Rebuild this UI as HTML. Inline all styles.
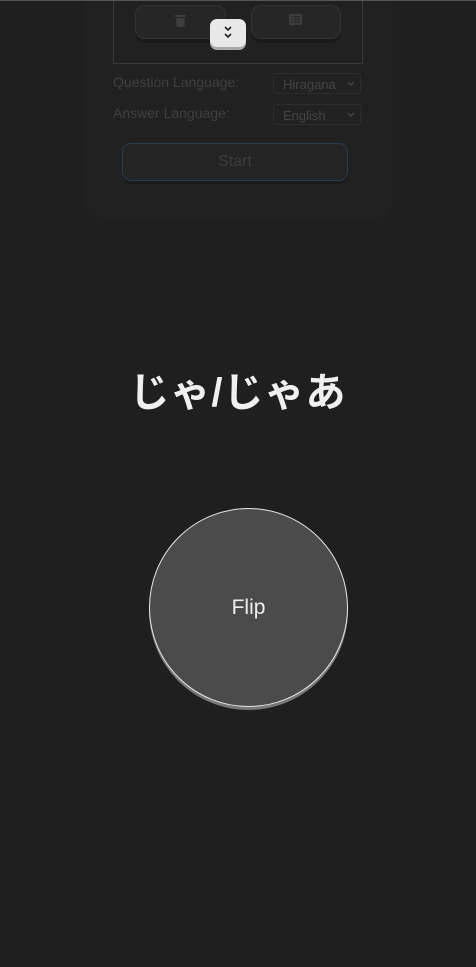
<!DOCTYPE html>
<html><head><meta charset="utf-8"><style>
html,body{margin:0;padding:0;width:476px;height:967px;background:#1f1f1f;overflow:hidden;font-family:"Liberation Sans","Noto Sans CJK JP",sans-serif;position:relative}
.top{position:absolute;left:0;top:0;width:476px;height:1px;background:#555;z-index:5}
.panel{position:absolute;left:84px;top:-20px;width:309px;height:238px;background:#212121;border-radius:0 0 18px 18px}
.box{position:absolute;left:113px;top:-2px;width:248px;height:64px;border:1px solid #3a3a3a}
.btn{position:absolute;top:5px;height:32px;background:#262626;border:1px solid #333;border-radius:10px;box-shadow:0 4px 0 #1a1a1a}
.tog{position:absolute;left:210px;top:19px;width:36px;height:28px;background:#e8e8e8;border-radius:7px;box-shadow:0 3px 0 #aaa}
.lbl{position:absolute;left:113px;color:#3f3f3f;font-size:14px}
.sel{position:absolute;left:273px;width:88px;height:21px;border:1px solid #2c2c2c;border-radius:3px;color:#444;font-size:13px;line-height:21px;box-sizing:border-box;padding-left:9px}
.sel svg{position:absolute;right:5px;top:7px}
.start{position:absolute;left:122px;top:143px;width:226px;height:38px;border:1px solid #2c3a4e;border-radius:9px;background:#242424;box-sizing:border-box;box-shadow:0 3px 0 #1a1a1a;color:#3c3c3c;font-size:16px;text-align:center;line-height:36px}
h1{position:absolute;left:0;width:476px;top:360px;margin:0;text-align:center;color:#f0f0f0;font-size:40px;font-weight:bold;letter-spacing:1px}
.flip{position:absolute;left:149px;top:508px;width:197px;height:197px;border-radius:50%;background:#4b4b4b;border:1.5px solid #e6e6e6;box-shadow:0 3px 0 #777;color:#eee;font-size:21px;text-align:center;line-height:197px}
</style></head><body>
<div class="top"></div>
<div class="panel"></div>
<div class="box"></div>
<div class="btn" style="left:135px;width:89px"><svg style="position:absolute;left:39px;top:8px" width="11" height="13" viewBox="0 0 11 13"><rect x="0" y="1" width="11" height="2" fill="#3d3d3d"/><rect x="1.5" y="4" width="8" height="9" fill="#3d3d3d"/></svg></div>
<div class="btn" style="left:251px;width:88px"><svg style="position:absolute;left:37px;top:8px" width="13" height="11" viewBox="0 0 13 11"><rect width="13" height="11" rx="2" fill="#3d3d3d"/><g stroke="#262626" stroke-width="1.2"><line x1="2" y1="3" x2="3" y2="3"/><line x1="4.5" y1="3" x2="11" y2="3"/><line x1="2" y1="5.5" x2="3" y2="5.5"/><line x1="4.5" y1="5.5" x2="11" y2="5.5"/><line x1="2" y1="8" x2="3" y2="8"/><line x1="4.5" y1="8" x2="11" y2="8"/></g></svg></div>
<div class="tog"><svg style="position:absolute;left:13px;top:7px" width="10" height="14" viewBox="0 0 10 14" fill="none" stroke="#222" stroke-width="1.6"><polyline points="2,1 5,4 8,1"/><polyline points="2,8 5,11 8,8"/></svg></div>
<div class="lbl" style="top:74px">Question Language:</div>
<div class="sel" style="top:73px">Hiragana<svg width="8" height="6" viewBox="0 0 8 6" fill="none" stroke="#444" stroke-width="1.5"><polyline points="1,1 4,4 7,1"/></svg></div>
<div class="lbl" style="top:105px">Answer Language:</div>
<div class="sel" style="top:104px">English<svg width="8" height="6" viewBox="0 0 8 6" fill="none" stroke="#444" stroke-width="1.5"><polyline points="1,1 4,4 7,1"/></svg></div>
<div class="start">Start</div>
<h1>じゃ/じゃあ</h1>
<div class="flip">Flip</div>
</body></html>
